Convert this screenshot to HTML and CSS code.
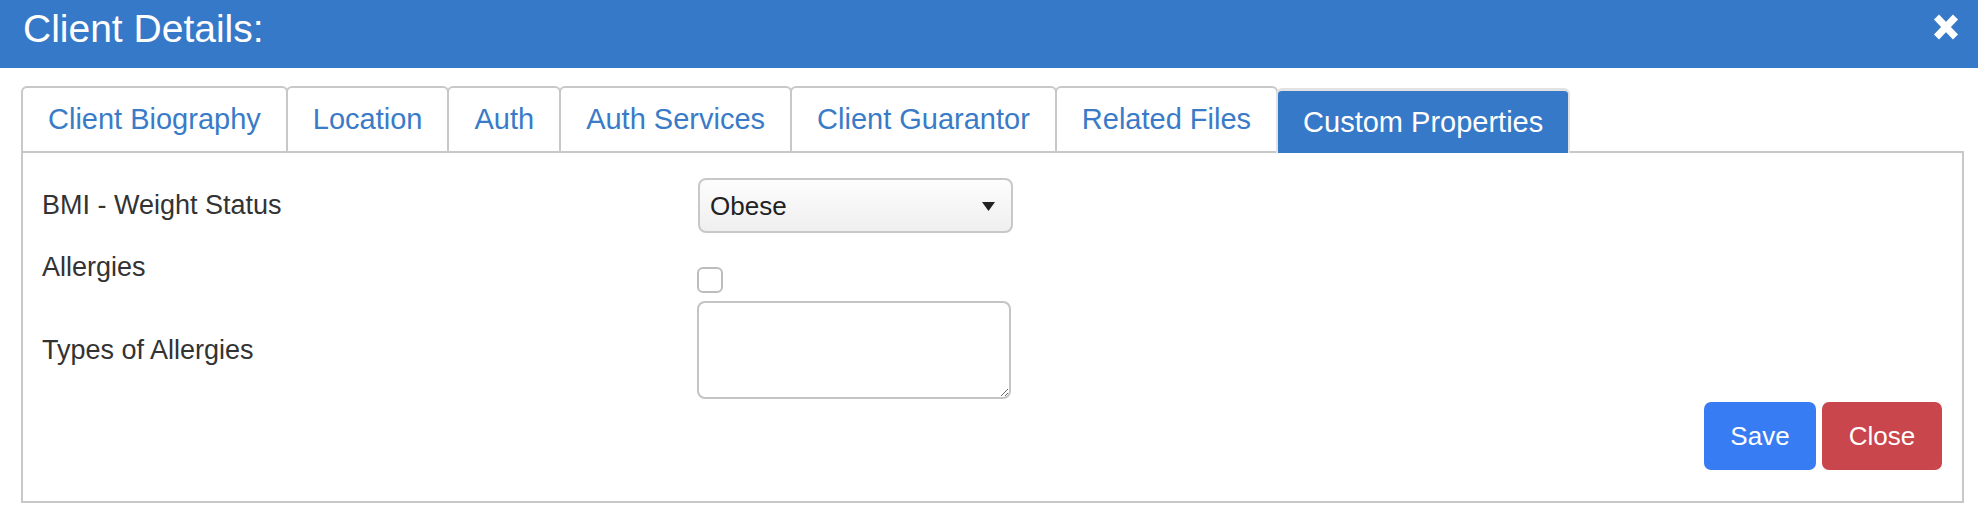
FILE: index.html
```html
<!DOCTYPE html>
<html lang="en">
<head>
<meta charset="utf-8">
<title>Client Details</title>
<link rel="stylesheet" href="styles.css">
</head>
<body>
<header class="modal-header">
  <h1 class="modal-title">Client Details:</h1>
  <button class="modal-x" aria-label="Close">
    <svg width="26" height="28" viewBox="0 0 26 28"><path d="M3.5 4 L22.5 24 M22.5 4 L3.5 24" stroke="#fff" stroke-width="7" stroke-linecap="butt" fill="none"/></svg>
  </button>
</header>
<main class="modal-body">
  <nav class="tabs">
    <a class="tab">Client Biography</a>
    <a class="tab">Location</a>
    <a class="tab">Auth</a>
    <a class="tab">Auth Services</a>
    <a class="tab">Client Guarantor</a>
    <a class="tab">Related Files</a>
    <a class="tab tab-active">Custom Properties</a>
  </nav>
  <section class="panel">
    <div class="row row-select">
      <label class="label">BMI - Weight Status</label>
      <div class="select-wrap">
        <select class="select"><option>Obese</option></select>
        <svg class="select-arrow" width="13" height="9" viewBox="0 0 13 9"><path d="M0 0 H13 L6.5 9 Z" fill="#222"/></svg>
      </div>
    </div>
    <div class="row row-check">
      <label class="label label-check">Allergies</label>
      <input type="checkbox" class="check">
    </div>
    <div class="row row-area">
      <label class="label">Types of Allergies</label>
      <textarea class="area"></textarea>
    </div>
    <div class="actions">
      <button class="btn btn-save">Save</button>
      <button class="btn btn-close">Close</button>
    </div>
  </section>
</main>
</body>
</html>
```
FILE: styles.css
```css
* { box-sizing: border-box; }
html, body { margin: 0; padding: 0; background: #fff; }
body { font-family: "Liberation Sans", Arial, sans-serif; color: #333; }

.modal-header {
  height: 68px;
  background: #3779c9;
  display: flex;
  justify-content: space-between;
  align-items: flex-start;
  padding: 0 19px 0 23px;
}
.modal-title {
  margin: 9px 0 0 0;
  font-size: 39px;
  line-height: 39px;
  font-weight: 400;
  color: #fff;
}
.modal-x {
  margin-top: 13px;
  padding: 0;
  border: 0;
  background: none;
  width: 26px;
  height: 28px;
  display: block;
}
.modal-x svg { display: block; }

.modal-body { padding: 18px 14px 0 21px; }

.tabs { display: flex; align-items: flex-end; }
.tab {
  height: 65px;
  display: flex;
  align-items: center;
  padding: 0 25px;
  border: 2px solid #c8c8c8;
  border-bottom: 0;
  border-radius: 6px 6px 0 0;
  margin-right: -2px;
  font-size: 29px;
  color: #3a7bc8;
  background: #fff;
  white-space: nowrap;
}
.tab-active {
  position: relative;
  z-index: 1;
  margin-bottom: -2px;
  background: #3779c9;
  color: #fff;
  border-color: #e2e2e2;
  border-top-width: 3px;
}

.panel {
  border: 2px solid #c8c8c8;
  padding: 25px 20px 31px 19px;
}
.row { display: flex; }
.label {
  width: 656px;
  flex: none;
  font-size: 27px;
  color: #333;
}
.row-select { height: 55px; align-items: center; }
.select-wrap { position: relative; width: 315px; height: 55px; }
.select {
  appearance: none;
  -webkit-appearance: none;
  width: 315px;
  height: 55px;
  border: 2px solid #c8c8c8;
  border-radius: 8px;
  background: linear-gradient(#fdfdfd, #efefef);
  font-family: "Liberation Sans", Arial, sans-serif;
  font-size: 26px;
  color: #222;
  padding: 0 0 0 10px;
}
.select-arrow { position: absolute; left: 284px; top: 24px; }

.row-check { margin-top: 15px; height: 45px; }
.label-check { line-height: 38px; }
.check {
  appearance: none;
  -webkit-appearance: none;
  margin: 0 0 0 -1px;
  align-self: flex-end;
  width: 26px;
  height: 26px;
  border: 2px solid #bdbdbd;
  border-radius: 6px;
  background: #fff;
}

.row-area { margin-top: 8px; align-items: center; }
.area {
  margin: 0 0 0 -1px;
  width: 314px;
  height: 98px;
  border: 2px solid #c4c4c4;
  border-radius: 8px;
  background: #fff;
  font-family: "Liberation Sans", Arial, sans-serif;
  font-size: 26px;
  display: block;
}

.actions {
  margin-top: 3px;
  display: flex;
  justify-content: flex-end;
  gap: 6px;
}
.btn {
  height: 68px;
  border: 0;
  border-radius: 7px;
  font-family: "Liberation Sans", Arial, sans-serif;
  font-size: 26px;
  color: #fff;
  padding: 0;
}
.btn-save { background: #387cf4; width: 112px; }
.btn-close { background: #ca464d; width: 120px; }
```
